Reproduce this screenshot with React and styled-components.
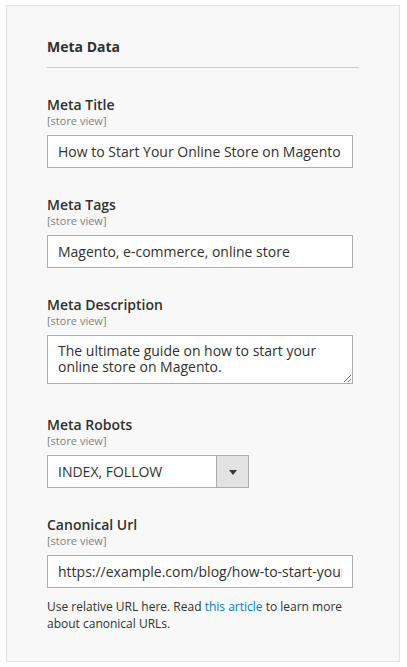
import React from "react";
import styled, { createGlobalStyle } from "styled-components";

const GlobalStyle = createGlobalStyle`
  html, body {
    margin: 0;
    padding: 0;
    background: #ffffff;
  }
  body {
    font-family: "Open Sans", "DejaVu Sans", sans-serif;
    color: #303030;
  }
  * {
    box-sizing: border-box;
  }
`;

const Page = styled.div`
  padding: 5px 7px 7px 6px;
`;

const Panel = styled.section`
  background: #f8f8f8;
  border: 1px solid #e3e3e3;
  padding: 31px 40px 29px 40px;
`;

const Legend = styled.h2`
  margin: 0;
  font-size: 14px;
  font-weight: 700;
  line-height: 20px;
  color: #303030;
  padding-bottom: 10px;
  border-bottom: 1px solid #cccccc;
`;

const Fields = styled.div`
  display: flex;
  flex-direction: column;
  gap: 28px;
  margin-top: 28px;
  width: 306px;
`;

const Field = styled.div`
  display: flex;
  flex-direction: column;
`;

const Label = styled.label`
  font-size: 14px;
  font-weight: 600;
  line-height: 18px;
  color: #303030;
`;

const Scope = styled.span`
  font-size: 11px;
  line-height: 13px;
  color: #808080;
  margin-bottom: 8px;
`;

const TextInput = styled.input`
  display: block;
  width: 100%;
  height: 33px;
  margin: 0;
  padding: 0 10px;
  border: 1px solid #adadad;
  border-radius: 0;
  background: #ffffff;
  font-family: "Open Sans", "DejaVu Sans", sans-serif;
  font-size: 14px;
  color: #303030;
  outline: none;
`;

const TextArea = styled.textarea`
  display: block;
  width: 100%;
  height: 49px;
  margin: 0 0 4px 0;
  padding: 7px 10px;
  border: 1px solid #adadad;
  border-radius: 0;
  background: #ffffff;
  font-family: "Open Sans", "DejaVu Sans", sans-serif;
  font-size: 14px;
  line-height: 16px;
  color: #303030;
  outline: none;
`;

const Select = styled.div`
  display: flex;
  width: 202px;
  height: 33px;
  border: 1px solid #adadad;
  background: #ffffff;
`;

const SelectValue = styled.span`
  flex: 1;
  display: flex;
  align-items: center;
  padding: 0 10px;
  font-size: 14px;
  color: #303030;
`;

const SelectButton = styled.span`
  width: 32px;
  display: flex;
  align-items: center;
  justify-content: center;
  background: #e3e3e3;
  border-left: 1px solid #adadad;
`;

const Arrow = styled.span`
  width: 0;
  height: 0;
  border-left: 4px solid transparent;
  border-right: 4px solid transparent;
  border-top: 5px solid #41362f;
  margin-top: 1px;
`;

const Note = styled.p`
  margin: 10px 0 0 0;
  font-size: 12px;
  line-height: 17px;
  color: #303030;
`;

const Link = styled.a`
  color: #007bdb;
  text-decoration: none;
`;

const fields = [
  { id: "meta-title", label: "Meta Title", value: "How to Start Your Online Store on Magento" },
  { id: "meta-tags", label: "Meta Tags", value: "Magento, e-commerce, online store" },
];

const App = () => {
  return (
    <Page>
      <GlobalStyle />
      <Panel>
        <Legend>Meta Data</Legend>
        <Fields>
          {fields.map((field) => (
            <Field key={field.id}>
              <Label htmlFor={field.id}>{field.label}</Label>
              <Scope>[store view]</Scope>
              <TextInput id={field.id} type="text" defaultValue={field.value} />
            </Field>
          ))}
          <Field>
            <Label htmlFor="meta-description">Meta Description</Label>
            <Scope>[store view]</Scope>
            <TextArea
              id="meta-description"
              defaultValue="The ultimate guide on how to start your online store on Magento."
            />
          </Field>
          <Field>
            <Label>Meta Robots</Label>
            <Scope>[store view]</Scope>
            <Select>
              <SelectValue>INDEX, FOLLOW</SelectValue>
              <SelectButton>
                <Arrow />
              </SelectButton>
            </Select>
          </Field>
          <Field>
            <Label htmlFor="canonical-url">Canonical Url</Label>
            <Scope>[store view]</Scope>
            <TextInput
              id="canonical-url"
              type="text"
              defaultValue="https://example.com/blog/how-to-start-your-online-store-on-magento"
            />
            <Note>
              Use relative URL here. Read <Link href="#">this article</Link> to learn more
              about canonical URLs.
            </Note>
          </Field>
        </Fields>
      </Panel>
    </Page>
  );
};

export default App;
